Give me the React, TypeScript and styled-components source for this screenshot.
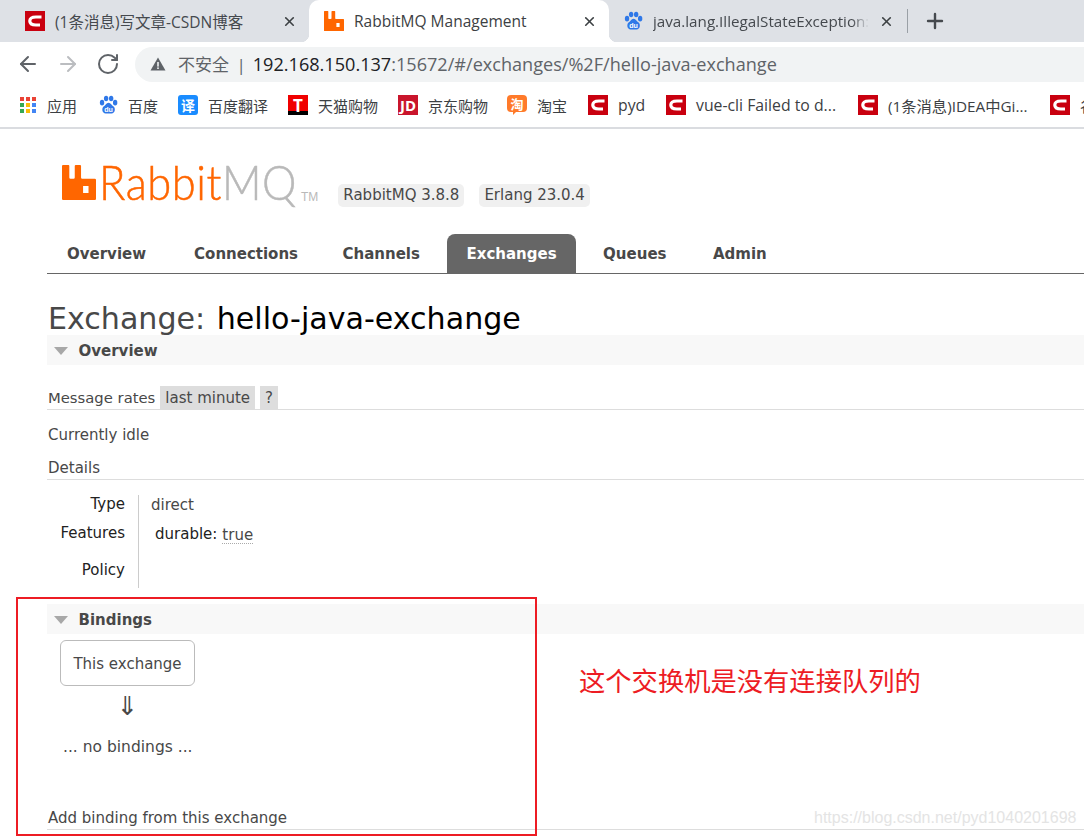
import React from 'react'
import styled, { createGlobalStyle } from 'styled-components'
import { ArrowLeft, ArrowRight, RotateCw, X, Plus } from 'lucide-react'

const UI_FONT = `"Open Sans", "Noto Sans CJK SC", sans-serif`
const PAGE_FONT = `"DejaVu Sans", Verdana, sans-serif`

const Global = createGlobalStyle`
  html, body { margin: 0; padding: 0; background: #fff; }
  body { width: 1084px; height: 837px; overflow: hidden; position: relative; }
`

const TabStrip = styled.div`
  height: 42px;
  background: #dee1e6;
  display: flex;
  align-items: stretch;
  padding-left: 10px;
  overflow: hidden;
`
const Tab = styled.div<{ $active?: boolean; $w: number }>`
  position: relative;
  width: ${p => p.$w}px;
  flex: none;
  box-sizing: border-box;
  display: flex;
  align-items: center;
  padding: 0 12px 0 15px;
  gap: 10px;
  background: ${p => (p.$active ? '#fff' : 'transparent')};
  border-radius: ${p => (p.$active ? '10px 10px 0 0' : '0')};
  font: 15.5px ${UI_FONT};
  color: ${p => (p.$active ? '#3c4043' : '#45494e')};
  ${p =>
    p.$active &&
    `
    &::before, &::after {
      content: '';
      position: absolute;
      bottom: 0;
      width: 8px;
      height: 8px;
    }
    &::before { left: -8px; background: radial-gradient(circle at 0 0, #dee1e6 8px, #fff 8.5px); }
    &::after { right: -8px; background: radial-gradient(circle at 100% 0, #dee1e6 8px, #fff 8.5px); }
  `}
`
const TabTitle = styled.span<{ $fade?: boolean }>`
  flex: 1;
  white-space: nowrap;
  overflow: hidden;
  ${p => p.$fade && 'font-size: 15.2px; mask-image: linear-gradient(90deg, #000 92%, transparent 100%);'}
`
const Divider = styled.div`
  width: 1px;
  height: 24px;
  background: #9aa0a6;
  align-self: center;
  margin: 0 15px 0 1px;
`
const NewTab = styled.div`
  display: flex;
  align-items: center;
  color: #45494e;
`
const Toolbar = styled.div`
  height: 44px;
  display: flex;
  align-items: center;
  padding-left: 16px;
  box-sizing: border-box;
`
const NavBtn = styled.div<{ $off?: boolean }>`
  width: 24px;
  margin-right: 16px;
  display: flex;
  color: ${p => (p.$off ? '#bbbdc0' : '#5f6368')};
`
const Omnibox = styled.div`
  flex: 1;
  height: 35px;
  margin-left: -1px;
  background: #f1f3f4;
  border-radius: 18px 0 0 18px;
  display: flex;
  align-items: center;
  padding: 0 0 1px 15px;
  box-sizing: border-box;
  font: 18.1px ${UI_FONT};
  color: #5f6368;
  white-space: nowrap;
`
const InsecureLabel = styled.span`
  margin-left: 12px;
  margin-right: 7px;
  font-size: 17px;
  color: #5f6368;
  word-spacing: 3px;
`
const Host = styled.span`
  color: #202124;
`
const Bookmarks = styled.div`
  height: 38px;
  padding: 0 0 3px 19px;
  display: flex;
  align-items: center;
  border-bottom: 2px solid #dadce0;
  font: 15px ${UI_FONT};
  color: #3c4043;
  white-space: nowrap;
  overflow: hidden;
`
const Mark = styled.div<{ $w: number; $size?: number }>`
  width: ${p => p.$w}px;
  flex: none;
  display: flex;
  align-items: center;
  gap: 10px;
  font-size: ${p => p.$size ?? 15}px;
`
const Fav = styled.span<{ $bg: string; $radius?: number; $fs?: number }>`
  position: relative;
  width: 20px;
  height: 20px;
  flex: none;
  display: flex;
  align-items: center;
  justify-content: center;
  background: ${p => p.$bg};
  border-radius: ${p => p.$radius ?? 0}px;
  color: #fff;
  font: bold ${p => p.$fs ?? 13}px ${UI_FONT};
`
const TaoFav = styled(Fav)`
  height: 17px;
  margin-bottom: 3px;
  &::after {
    content: '';
    position: absolute;
    left: 6px;
    top: 16px;
    border-style: solid;
    border-width: 4px 4px 0 0;
    border-color: #ff7a2a transparent transparent;
  }
`

const Page = styled.main`
  padding: 0 0 0 47px;
  font: 15px ${PAGE_FONT};
  color: #484848;
`
const Header = styled.header`
  height: 105px;
  padding-left: 15px;
  display: flex;
  align-items: flex-start;
  padding-top: 36px;
  box-sizing: border-box;
`
const LogoText = styled.span`
  font: 300 47px/44px Lato, sans-serif;
  color: #ff6600;
  display: inline-block;
  width: 197px;
  margin-left: 3px;
  margin-top: -5px;
  letter-spacing: 0.6px;
  transform: scaleX(0.925);
  transform-origin: left center;
  -webkit-text-stroke: 0.5px currentColor;
  white-space: nowrap;
`
const LogoGrey = styled.span`
  color: #b9b9b9;
`
const Tm = styled.span`
  font: 12px "Liberation Sans", sans-serif;
  color: #b9b9b9;
  margin: 25px 5px 0 5px;
`
const Badge = styled.span`
  background: #f0f0f0;
  border-radius: 5px;
  height: 23px;
  line-height: 23px;
  padding: 0 5px;
  margin-top: 19px;
  margin-left: 15px;
`
const Nav = styled.nav`
  height: 39px;
  padding-left: 0.5px;
  display: flex;
  border-bottom: 1px solid #666;
`
const NavItem = styled.a<{ $active?: boolean }>`
  padding: 0 19.5px;
  margin-right: 7.5px;
  font: bold 15px/40px ${PAGE_FONT};
  color: ${p => (p.$active ? '#fff' : '#484848')};
  background: ${p => (p.$active ? '#666' : 'transparent')};
  border-radius: 8px 8px 0 0;
  &:first-child { margin-right: 9px; }
  &:nth-child(2) { margin-right: 5.5px; }
`
const Title = styled.h1`
  margin: 23px 0 0 1px;
  height: 38px;
  font: 30.1px/44px ${PAGE_FONT};
  color: #484848;
  white-space: nowrap;
  b { font-weight: normal; color: #000; margin-left: 2px; }
`
const SectionHead = styled.h2<{ $top?: number }>`
  margin: ${p => p.$top ?? 0}px 0 0;
  height: 30px;
  box-sizing: border-box;
  padding: 1px 0 0 7px;
  background: #f8f8f8;
  display: flex;
  align-items: center;
  gap: 10.5px;
  font: bold 15px ${PAGE_FONT};
  color: #484848;
`
const Caret = styled.i`
  width: 0;
  height: 0;
  border-style: solid;
  border-width: 8px 7.5px 0;
  border-color: #a8a8a8 transparent transparent;
`
const RatesRow = styled.div`
  margin-top: 21px;
  padding-left: 1px;
  height: 23px;
  display: flex;
  align-items: stretch;
  border-bottom: 1px solid #ddd;
  line-height: 23px;
`
const RatesLabel = styled.span`
  font-size: 14.8px;
`
const Chip = styled.span`
  background: #ddd;
  padding: 0 5px;
  margin-left: 5px;
  line-height: 25px;
`
const Para = styled.p`
  margin: 15px 0 0 1px;
  line-height: 20px;
`
const SubHead = styled.div`
  margin-top: 13px;
  padding-left: 1px;
  height: 21px;
  line-height: 20px;
  border-bottom: 1px solid #ddd;
`
const Facts = styled.div`
  margin-top: 15px;
  display: grid;
  grid-template-columns: 78px 14px 1fr;
  grid-template-rows: 29px 37px 27px;
  width: 400px;
`
const FactLabel = styled.div`
  padding-top: 1px;
  text-align: right;
  color: #222;
  line-height: 16px;
`
const FactRule = styled.div`
  grid-column: 2;
  grid-row: 1 / span 3;
  border-right: 1px solid #ccc;
  margin-left: -1px;
`
const FactValue = styled.div`
  padding: 1px 0 0 12px;
  line-height: 18px;
`
const Durable = styled.span`
  color: #222;
  margin: 0 5px 0 4px;
`
const Acronym = styled.span`
  border-bottom: 1px dotted #aaa;
  position: relative;
  top: 1px;
  line-height: 16px;
  display: inline-block;
`
const Node = styled.div`
  margin: 6px 0 0 13px;
  width: 135px;
  height: 46px;
  box-sizing: border-box;
  border: 1px solid #bbb;
  border-radius: 6px;
  text-align: center;
  line-height: 46px;
`
const DownArrow = styled.div`
  width: 135px;
  margin-left: 13px;
  margin-top: 7px;
  text-align: center;
  font: 26px/26px ${PAGE_FONT};
`
const NoBindings = styled.div`
  margin: 19px 0 0 16px;
  line-height: 18px;
  font-size: 15.5px;
`
const AddBinding = styled.div`
  margin-top: 52px;
  padding-left: 1px;
  height: 21px;
  line-height: 20px;
  border-bottom: 1px solid #ddd;
`

const RedBox = styled.div`
  position: absolute;
  left: 16px;
  top: 597px;
  width: 517px;
  height: 235px;
  border: 2px solid #ed1c24;
`
const Note = styled.div`
  position: absolute;
  left: 579px;
  top: 663px;
  font: 26.3px/34px "Noto Sans CJK SC", sans-serif;
  color: #ed1c24;
  white-space: nowrap;
`
const Watermark = styled.div`
  position: absolute;
  left: 814px;
  top: 809px;
  font: 16px/18px "Liberation Sans", sans-serif;
  color: #e4e4e4;
`

const Csdn = () => (
  <Fav $bg="#c9000f">
    <svg width="20" height="20" viewBox="0 0 20 20">
      <path d="M16.5 6 H11 C7 6 4.8 7.6 4.8 10 C4.8 12.4 7 14 11 14 H15" fill="none" stroke="#fff" strokeWidth="3.2" />
    </svg>
  </Fav>
)

const Paw = () => (
  <svg width="19" height="20" viewBox="0 0 20 20" fill="#2f78e8">
    <ellipse cx="3.2" cy="7.5" rx="2.3" ry="2.9" />
    <ellipse cx="7.5" cy="3.2" rx="2.3" ry="2.9" />
    <ellipse cx="12.8" cy="3.2" rx="2.3" ry="2.9" />
    <ellipse cx="17" cy="7.5" rx="2.3" ry="2.9" />
    <path d="M10 7.5 C7.5 7.5 7 10 4.8 11.7 C2.6 13.6 3.2 19 7 19 H13.2 C17 19 17.6 13.6 15.4 11.7 C13.3 10 12.5 7.5 10 7.5Z" />
    <text x="10" y="17.6" fontSize="7.5" fontWeight="bold" textAnchor="middle" fill="#fff" fontFamily="Liberation Sans, sans-serif">du</text>
  </svg>
)

const Rabbit = ({ w, h }: { w: number; h: number }) => (
  <svg width={w} height={h} viewBox="0 0 20 20" preserveAspectRatio="none">
    <path
      fillRule="evenodd"
      fill="#ff6600"
      d="M0.6 0 H3.8 Q4.3 0 4.3 .6 V7.2 Q4.3 7.9 5 7.9 H6.8 Q7.5 7.9 7.5 7.2 V.6 Q7.5 0 8.1 0 H10.6 Q11.2 0 11.2 .6 V7.2 Q11.2 7.9 11.9 7.9 H19.3 Q20 7.9 20 8.6 V19.4 Q20 20 19.3 20 H.7 Q0 20 0 19.4 V.6 Q0 0 .6 0 Z M12.4 12 V16 H15.6 V12 Z"
    />
  </svg>
)

const Apps = () => (
  <svg width="18" height="18" viewBox="0 0 18 18">
    {['#ea4335', '#ea4335', '#ea4335', '#34a853', '#fbbc05', '#4285f4', '#34a853', '#fbbc05', '#4285f4'].map((c, i) => (
      <rect key={i} x={1 + (i % 3) * 6} y={1 + Math.floor(i / 3) * 6} width="4" height="4" fill={c} />
    ))}
  </svg>
)

const Warn = () => (
  <svg width="16" height="16" viewBox="0 0 16 16">
    <path d="M8 1.5 L15.5 14.5 H.5 Z" fill="#5f6368" />
    <rect x="7.2" y="6" width="1.6" height="4.6" fill="#f1f3f4" />
    <rect x="7.2" y="11.4" width="1.6" height="1.6" fill="#f1f3f4" />
  </svg>
)

const Close = () => <X size={15} strokeWidth={2.6} color="#3c4043" />

const tabs = ['Overview', 'Connections', 'Channels', 'Exchanges', 'Queues', 'Admin']

export default function App() {
  return (
    <>
      <Global />
      <TabStrip>
        <Tab $w={299}>
          <Csdn />
          <TabTitle>(1条消息)写文章-CSDN博客</TabTitle>
          <Close />
        </Tab>
        <Tab $active $w={300}>
          <Rabbit w={20} h={20} />
          <TabTitle>RabbitMQ Management</TabTitle>
          <Close />
        </Tab>
        <Tab $w={297}>
          <Paw />
          <TabTitle $fade>java.lang.IllegalStateException:</TabTitle>
          <Close />
        </Tab>
        <Divider />
        <NewTab><Plus size={24} strokeWidth={2.4} /></NewTab>
      </TabStrip>
      <Toolbar>
        <NavBtn><ArrowLeft size={24} /></NavBtn>
        <NavBtn $off><ArrowRight size={24} /></NavBtn>
        <NavBtn><RotateCw size={24} /></NavBtn>
        <Omnibox>
          <Warn />
          <InsecureLabel>不安全 |</InsecureLabel>
          <Host>192.168.150.137</Host>:15672/#/exchanges/%2F/hello-java-exchange
        </Omnibox>
      </Toolbar>
      <Bookmarks>
        <Mark $w={80}><Apps />应用</Mark>
        <Mark $w={79}><Paw />百度</Mark>
        <Mark $w={110}><Fav $bg="#1a8cff" $radius={3} $fs={14}>译</Fav>百度翻译</Mark>
        <Mark $w={110}>
          <Fav $bg="linear-gradient(#f00000 78%, #000 78%)" $fs={17}>T</Fav>天猫购物
        </Mark>
        <Mark $w={109}><Fav $bg="#c9152c" $fs={15}>JD</Fav>京东购物</Mark>
        <Mark $w={81}><TaoFav $bg="#ff7a2a" $radius={4}>淘</TaoFav>淘宝</Mark>
        <Mark $w={78} $size={15.8}><Csdn />pyd</Mark>
        <Mark $w={192} $size={15.8}><Csdn />vue-cli Failed to d...</Mark>
        <Mark $w={192} $size={15.3}><Csdn />(1条消息)IDEA中Gi...</Mark>
        <Mark $w={40}><Csdn />谷</Mark>
      </Bookmarks>
      <Page>
        <Header>
          <Rabbit w={34} h={35} />
          <LogoText>Rabbit<LogoGrey>MQ</LogoGrey></LogoText>
          <Tm>TM</Tm>
          <Badge>RabbitMQ 3.8.8</Badge>
          <Badge>Erlang 23.0.4</Badge>
        </Header>
        <Nav>
          {tabs.map(t => (
            <NavItem key={t} $active={t === 'Exchanges'}>{t}</NavItem>
          ))}
        </Nav>
        <Title>Exchange: <b>hello-java-exchange</b></Title>
        <SectionHead><Caret />Overview</SectionHead>
        <RatesRow>
          <RatesLabel>Message rates</RatesLabel><Chip>last minute</Chip><Chip>?</Chip>
        </RatesRow>
        <Para>Currently idle</Para>
        <SubHead>Details</SubHead>
        <Facts>
          <FactLabel>Type</FactLabel>
          <FactRule />
          <FactValue>direct</FactValue>
          <FactLabel>Features</FactLabel>
          <FactValue><Durable>durable:</Durable><Acronym>true</Acronym></FactValue>
          <FactLabel>Policy</FactLabel>
          <FactValue />
        </Facts>
        <SectionHead $top={16}><Caret />Bindings</SectionHead>
        <Node>This exchange</Node>
        <DownArrow>⇓</DownArrow>
        <NoBindings>... no bindings ...</NoBindings>
        <AddBinding>Add binding from this exchange</AddBinding>
      </Page>
      <RedBox />
      <Note>这个交换机是没有连接队列的</Note>
      <Watermark>https://blog.csdn.net/pyd1040201698</Watermark>
    </>
  )
}
